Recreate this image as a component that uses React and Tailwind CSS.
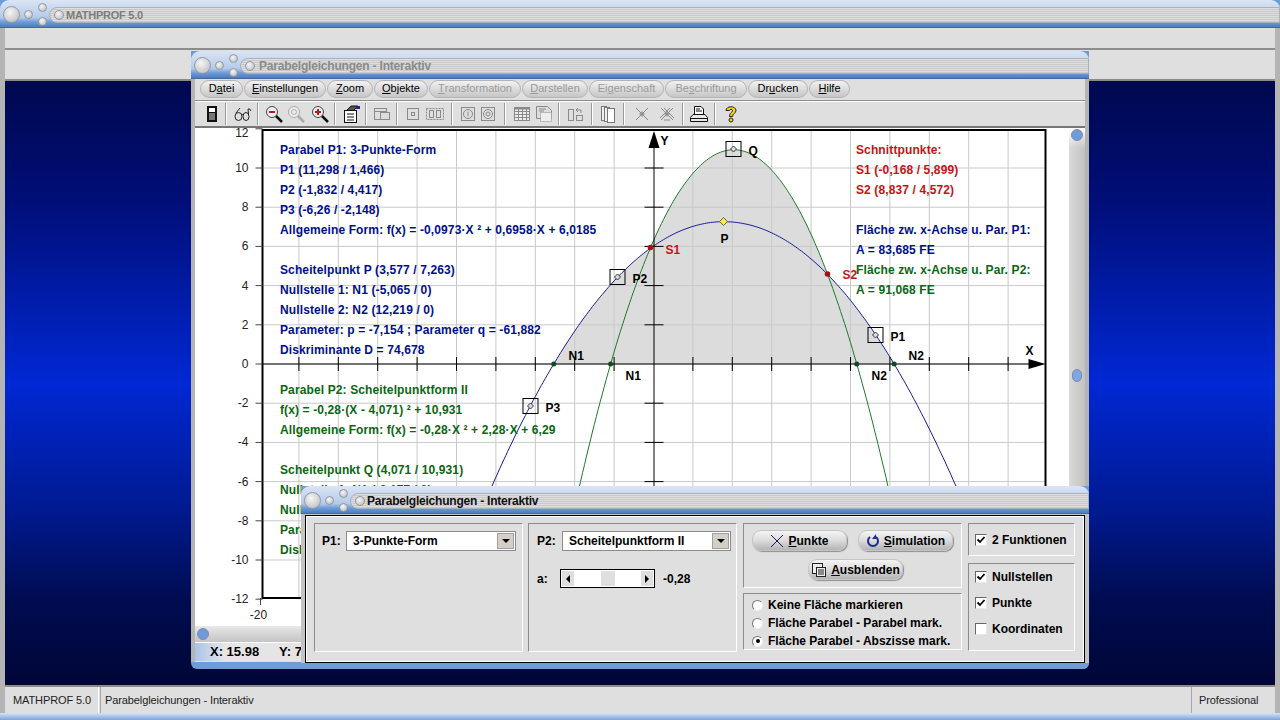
import React from "react";

const FONT = "font-['Liberation_Sans',Arial,sans-serif]";

// Parabolas shown in the plot, and the pixel mapping of the axes
const p1 = (x) => -0.0973 * x * x + 0.6958 * x + 6.0185;
const p2 = (x) => -0.28 * x * x + 2.28 * x + 6.29;
const px = (x) => 653 + x * 19.7;
const py = (y) => 364 - y * 19.6;

const curve = (f) => {
  let d = "";
  for (let x = -20; x <= 20; x += 0.1) d += `${d ? "L" : "M"}${px(x).toFixed(1)} ${py(f(x)).toFixed(1)} `;
  return d;
};

const areaPath = () => {
  let d = `M${px(-5.065)} ${py(0)} `;
  for (let x = -5.065; x <= 12.219; x += 0.05) d += `L${px(x).toFixed(1)} ${py(Math.max(p1(x), p2(x), 0)).toFixed(1)} `;
  return d + `L${px(12.219)} ${py(0)} Z`;
};

const Knob = ({ className }) => (
  <span className={`block rounded-full border border-[#8d99ab] bg-[radial-gradient(circle_at_40%_35%,#f6f6f6,#b6b6b6)] ${className}`} />
);

const TitleBar = ({ title, titleClass }) => (
  <div className="flex h-[28px] shrink-0 items-start rounded-t-[9px] border-b border-[#46689a] bg-[linear-gradient(180deg,#dbe5f4_0%,#b5cae9_65%,#6a9ad8_82%,#4d7dbd_100%)] pl-[3px]">
    <Knob className="mt-[6px] h-[17px] w-[17px]" />
    <Knob className="ml-[4px] mt-[10px] h-[9px] w-[9px]" />
    <div className="ml-[5px] flex flex-col gap-[5px] pt-[3px]">
      <Knob className="h-[9px] w-[9px]" />
      <Knob className="h-[9px] w-[9px]" />
    </div>
    <div className="ml-[2px] mt-[7px] flex h-[16px] flex-1 items-center rounded-l-[9px] border border-[#aab2bd] bg-[repeating-linear-gradient(180deg,#dedede_0,#dedede_1px,#c9c9c9_1px,#c9c9c9_2px)] pl-[4px]">
      <Knob className="h-[10px] w-[10px]" />
      <span className={`ml-[2px] font-bold leading-none ${titleClass}`}>{title}</span>
    </div>
  </div>
);

const menus = [
  ["D", "a", "tei", "w-[43px]", true],
  ["", "E", "instellungen", "w-[82px]", true],
  ["", "Z", "oom", "w-[46px]", true],
  ["", "O", "bjekte", "w-[54px]", true],
  ["", "T", "ransformation", "w-[92px]", false],
  ["", "D", "arstellen", "w-[66px]", false],
  ["Ei", "g", "enschaft", "w-[75px]", false],
  ["Be", "s", "chriftung", "w-[82px]", false],
  ["Dr", "u", "cken", "w-[60px]", true],
  ["", "H", "ilfe", "w-[41px]", true],
];

const IconDevice = () => (
  <svg width="20" height="20" viewBox="0 0 20 20"><rect x="5" y="2" width="10" height="16" fill="#111" /><rect x="7" y="4" width="6" height="4" fill="#fff" /><rect x="7" y="9" width="6" height="7" fill="#777" /></svg>
);
const IconGlasses = () => (
  <svg width="20" height="20" viewBox="0 0 20 20" fill="none" stroke="#222" strokeWidth="1"><ellipse cx="5.5" cy="12.5" rx="3.5" ry="4" /><ellipse cx="13" cy="12.5" rx="3" ry="4" /><path d="M9 11 Q9.500 10 10 11M3 9 L7 4 M15.500 10 L15 5 Q17 4 18 7" /></svg>
);
const IconMag = ({ sign, tone }) => (
  <svg width="20" height="20" viewBox="0 0 20 20" fill="none">
    <circle cx="8" cy="8" r="5.500" stroke={tone ? "#444" : "#aaa"} fill="#eee" />
    <path d="M12 12 L18 18" stroke={tone ? "#111" : "#aaa"} strokeWidth="2.500" />
    {sign === "o" && <circle cx="8" cy="8" r="2.500" stroke="#aaa" />}
    {sign !== "o" && <path d={sign === "+" ? "M5 8 H11 M8 5 V11" : "M5 8 H11"} stroke="#c01818" strokeWidth="2" />}
  </svg>
);
const IconClipboard = () => (
  <svg width="20" height="20" viewBox="0 0 20 20" fill="none" stroke="#111"><rect x="3.500" y="6.500" width="12" height="12" fill="#fff" /><path d="M6 10H13M6 13H13M6 16H13" /><path d="M6 6 L10 2 L17 2 L13 6" fill="#555" /><rect x="15" y="2" width="4" height="3" fill="#1a2a90" stroke="none" /></svg>
);
const IconWindows = () => (
  <svg width="20" height="20" viewBox="0 0 20 20" fill="none" stroke="#8a8a8a"><rect x="2.500" y="4.500" width="12" height="11" /><rect x="8.500" y="8.500" width="9" height="7" fill="#ddd" /><path d="M2.500 7.500H14.500" /></svg>
);
const IconBox = () => (
  <svg width="20" height="20" viewBox="0 0 20 20" fill="none" stroke="#8a8a8a"><rect x="4.500" y="4.500" width="11" height="11" /><rect x="8.500" y="8.500" width="3" height="3" /></svg>
);
const IconDoubleBox = () => (
  <svg width="20" height="20" viewBox="0 0 20 20" fill="none" stroke="#8a8a8a"><rect x="1.500" y="4.500" width="17" height="11" strokeDasharray="2 1" /><rect x="4.500" y="6.500" width="4" height="7" /><rect x="11.500" y="6.500" width="4" height="7" /></svg>
);
const IconRound = ({ inner }) => (
  <svg width="20" height="20" viewBox="0 0 20 20" fill="none" stroke="#8a8a8a"><rect x="3.500" y="3.500" width="13" height="13" /><circle cx="10" cy="10" r="4.500" />{inner}</svg>
);
const IconTable = () => (
  <svg width="20" height="20" viewBox="0 0 20 20" fill="#eee" stroke="#8a8a8a"><rect x="2.500" y="4.500" width="15" height="12" /><path d="M2.500 7.500H17.500M2.500 10.500H17.500M2.500 13.500H17.500M6.500 4.500V16.500M10.500 4.500V16.500M14.500 4.500V16.500" /><rect x="2" y="3" width="16" height="2.500" fill="#8a8a8a" stroke="none" /></svg>
);
const IconSheets = () => (
  <svg width="20" height="20" viewBox="0 0 20 20" fill="#ddd" stroke="#8a8a8a"><path d="M2.500 2.500H13.500L17.500 6.500V14.500H2.500Z" /><rect x="6.500" y="8.500" width="11" height="9" fill="#eee" strokeDasharray="1 1" /><path d="M5 5H12M5 7H10" /></svg>
);
const IconArrange = () => (
  <svg width="20" height="20" viewBox="0 0 20 20" fill="none" stroke="#8a8a8a"><rect x="3.500" y="5.500" width="5" height="11" /><rect x="11.500" y="11.500" width="6" height="5" /><path d="M11 6H16V9M11 6L13 4M11 6L13 8" /></svg>
);
const IconPages = () => (
  <svg width="20" height="20" viewBox="0 0 20 20" fill="#eee" stroke="#777"><rect x="3.500" y="2.500" width="5" height="14" /><rect x="6.500" y="3.500" width="5" height="14" /><rect x="9.500" y="4.500" width="7" height="14" fill="#fff" /></svg>
);
const IconCross = ({ double }) => (
  <svg width="20" height="20" viewBox="0 0 20 20" fill="none" stroke="#8a8a8a"><path d="M4 4L16 16M16 4L4 16" />{double && <path d="M7 4L17 14M13 4L3 14M7 16L13 16" />}<circle cx="10" cy="10" r="2" /></svg>
);
const IconPrinter = () => (
  <svg width="20" height="20" viewBox="0 0 20 20" fill="#fff" stroke="#111"><path d="M5.500 2.500H12L14.500 5V10.500H5.500Z" /><path d="M7 5H11M7 7H13" /><path d="M4 10.500H16L18.500 13.500V17.500H1.500V13.500Z" fill="#e8e8e8" /><path d="M1.500 14.500H18.500" /></svg>
);
const IconHelp = () => (
  <svg width="20" height="20" viewBox="0 0 20 20" fill="#f2d21c" stroke="#222"><path d="M5 6.500C5 1.500 15 1.500 15 6.500C15 9.500 11.500 9.500 11.500 12.500H8.500C8.500 8.500 11.500 8.500 11.500 6.500C11.500 5 8.500 5 8.500 6.500Z" /><circle cx="10" cy="16" r="2" /></svg>
);

// ml values are the distance to the previous item, measured from the toolbar
const tools = [
  ["ml-[1px]", <IconDevice />],
  ["ml-[3px]"],
  ["ml-[6px]", <IconGlasses />],
  ["ml-[4px]"],
  ["ml-[5px]", <IconMag sign="-" tone />],
  ["ml-[2px]", <IconMag sign="o" />],
  ["ml-[4px]", <IconMag sign="+" tone />],
  ["ml-[4px]"],
  ["ml-[5px]", <IconClipboard />],
  ["ml-[4px]"],
  ["ml-[5px]", <IconWindows />],
  ["ml-[4px]"],
  ["ml-[5px]", <IconBox />],
  ["ml-[2px]", <IconDoubleBox />],
  ["ml-[6px]"],
  ["ml-[5px]", <IconRound inner={<path d="M10 7.500V12.500" />} />],
  ["ml-[0px]", <IconRound inner={<circle cx="10" cy="10" r="2" />} />],
  ["ml-[6px]"],
  ["ml-[6px]", <IconTable />],
  ["ml-[2px]", <IconSheets />],
  ["ml-[4px]"],
  ["ml-[5px]", <IconArrange />],
  ["ml-[6px]"],
  ["ml-[5px]", <IconPages />],
  ["ml-[5px]"],
  ["ml-[7px]", <IconCross />],
  ["ml-[5px]", <IconCross double />],
  ["ml-[5px]"],
  ["ml-[5px]", <IconPrinter />],
  ["ml-[5px]"],
  ["ml-[5px]", <IconHelp />],
];

const Plot = () => {
  const xs = [];
  for (let v = -18; v <= 18; v += 2) if (v !== 0) xs.push(v);
  const ys = [];
  for (let v = -12; v <= 12; v += 2) ys.push(v);
  const label = "fill-black text-[12px] font-bold";
  return (
    <svg className="absolute inset-0 h-full w-full overflow-visible" viewBox="195 128 873 498" fontFamily="Liberation Sans, Arial, sans-serif">
      <defs>
        <clipPath id="frame"><rect x="263" y="130" width="782" height="468" /></clipPath>
      </defs>
      <g clipPath="url(#frame)">
        <path d={areaPath()} fill="#dcdcdc" />
        {xs.map((v) => <path key={v} d={`M${px(v)} 130V598`} stroke="#c9c9c9" />)}
        {ys.map((v) => <path key={v} d={`M263 ${py(v)}H1045`} stroke="#c9c9c9" />)}
        <path d={curve(p1)} fill="none" stroke="#1a1a9a" />
        <path d={curve(p2)} fill="none" stroke="#1f7a2a" />
      </g>
      <rect x="262" y="130" width="783" height="468" fill="none" stroke="#000" strokeWidth="2" />
      {ys.map((v) => (
        <g key={v}>
          <path d={`M255 ${py(v)}H262`} stroke="#444" />
          <text x="248" y={v === 12 ? 137 : py(v) + 4} textAnchor="end" className="fill-[#222] text-[12px]">{v}</text>
        </g>
      ))}
      <path d="M260 598V605" stroke="#444" />
      <text x="258" y="619" textAnchor="middle" className="fill-[#222] text-[12px]">-20</text>
      {/* axes with arrows */}
      <path d="M262 364H1030" stroke="#000" />
      <path d="M1028 359L1045 364L1028 369Z" fill="#000" />
      <path d="M653.500 598V146" stroke="#000" />
      <path d="M648 148L653.500 131L659 148Z" fill="#000" />
      {xs.map((v) => <path key={v} d={`M${px(v)} 357V371`} stroke="#000" />)}
      {ys.filter((v) => v !== 0 && v < 12).map((v) => <path key={v} d={`M644 ${py(v)}H663`} stroke="#000" />)}
      {/* points */}
      {[[-5.065, 0], [-2.177, 0], [10.319, 0], [12.219, 0]].map(([x, y]) => (
        <circle key={x} cx={px(x)} cy={py(y)} r="2.500" fill="#0e4a22" />
      ))}
      <circle cx="650" cy="247.500" r="2.800" fill="#a31212" />
      <circle cx="827" cy="274" r="2.800" fill="#a31212" />
      <path d="M723 217.500L727 221.500L723 225.500L719 221.500Z" fill="#f2e85c" stroke="#6a6a20" />
      {[[733, 149], [617, 277], [875, 335], [530, 406]].map(([x, y]) => (
        <g key={x}>
          <rect x={x - 7.500} y={y - 7.500} width="15" height="15" fill="none" stroke="#000" />
          <path d={`M${x} ${y - 3}L${x + 3} ${y}L${x} ${y + 3}L${x - 3} ${y}Z`} fill="#ddd" stroke="#333" />
        </g>
      ))}
      <text x="660" y="145" className={label}>Y</text>
      <text x="1025" y="355" className={label}>X</text>
      <text x="748" y="155" className={label}>Q</text>
      <text x="720" y="243" className={label}>P</text>
      <text x="632" y="283" className={label}>P2</text>
      <text x="890" y="341" className={label}>P1</text>
      <text x="545" y="412" className={label}>P3</text>
      <text x="568" y="360" className={label}>N1</text>
      <text x="625" y="380" className={label}>N1</text>
      <text x="871" y="380" className={label}>N2</text>
      <text x="908" y="360" className={label}>N2</text>
      <text x="665" y="254" className="fill-[#c01818] text-[12px] font-bold">S1</text>
      <text x="842" y="279" className="fill-[#c01818] text-[12px] font-bold">S2</text>
    </svg>
  );
};

const leftLines = [
  ["Parabel P1: 3-Punkte-Form", "text-[#00108c]"],
  ["P1 (11,298 / 1,466)", "text-[#00108c]"],
  ["P2 (-1,832 / 4,417)", "text-[#00108c]"],
  ["P3 (-6,26 / -2,148)", "text-[#00108c]"],
  ["Allgemeine Form: f(x) = -0,0973·X ² + 0,6958·X + 6,0185", "text-[#00108c]"],
  [""],
  ["Scheitelpunkt P (3,577 / 7,263)", "text-[#00108c]"],
  ["Nullstelle 1: N1 (-5,065 / 0)", "text-[#00108c]"],
  ["Nullstelle 2: N2 (12,219 / 0)", "text-[#00108c]"],
  ["Parameter: p = -7,154 ; Parameter q = -61,882", "text-[#00108c]"],
  ["Diskriminante D = 74,678", "text-[#00108c]"],
  [""],
  ["Parabel P2: Scheitelpunktform II", "text-[#0a6614]"],
  ["f(x) = -0,28·(X - 4,071) ² + 10,931", "text-[#0a6614]"],
  ["Allgemeine Form: f(x) = -0,28·X ² + 2,28·X + 6,29", "text-[#0a6614]"],
  [""],
  ["Scheitelpunkt Q (4,071 / 10,931)", "text-[#0a6614]"],
  ["Nullstelle 1: N1 (-2,177 / 0)", "text-[#0a6614]"],
  ["Nullstelle 2: N2 (10,319 / 0)", "text-[#0a6614]"],
  ["Parameter: p = -8,143 ; Parameter q = -22,464", "text-[#0a6614]"],
  ["Diskriminante D = 39,041", "text-[#0a6614]"],
];

const rightLines = [
  ["Schnittpunkte:", "text-[#c41414]"],
  ["S1 (-0,168 / 5,899)", "text-[#c41414]"],
  ["S2 (8,837 / 4,572)", "text-[#c41414]"],
  [""],
  ["Fläche zw. x-Achse u. Par. P1:", "text-[#00108c]"],
  ["A = 83,685 FE", "text-[#00108c]"],
  ["Fläche zw. x-Achse u. Par. P2:", "text-[#0a6614]"],
  ["A = 91,068 FE", "text-[#0a6614]"],
];

const TextBlock = ({ lines, className }) => (
  <div className={`absolute text-[12px] font-bold leading-[20px] tracking-[0.12px] ${className}`}>
    {lines.map(([text, color], i) => (
      <div key={i} className={`h-[20px] whitespace-nowrap ${color || ""}`}>{text}</div>
    ))}
  </div>
);

const Panel = ({ className, children }) => (
  <div className={`border border-b-white border-l-[#8c8c8c] border-r-white border-t-[#8c8c8c] bg-[#dfdfdf] ${className}`}>{children}</div>
);

const Combo = ({ label, value, className, labelClass }) => (
  <div className={`flex items-center ${className || ""}`}>
    <span className={`text-[12px] font-bold ${labelClass}`}>{label}</span>
    <div className="flex h-[20px] flex-1 items-center border border-[#8c8c8c] bg-white pl-[6px]">
      <span className="flex-1 text-[12px] font-bold">{value}</span>
      <span className="mr-[1px] flex h-[16px] w-[17px] items-center justify-center border border-[#a0a0a0] bg-[#d4d0c8]">
        <span className="border-x-[4px] border-t-[4px] border-x-transparent border-t-black" />
      </span>
    </div>
  </div>
);

const PushButton = ({ icon, first, rest, className }) => (
  <div className={`flex h-[21px] items-center justify-center gap-[4px] rounded-[9px] border border-[#c4c4c4] bg-gradient-to-b from-[#f4f4f4] via-[#dcdcdc] to-[#b4b4b4] text-[12px] font-bold shadow-[1px_1px_1px_#8f8f8f] ${className}`}>
    {icon}
    <span><u>{first}</u>{rest}</span>
  </div>
);

const Check = ({ label, checked, className }) => (
  <div className={`flex h-[14px] items-center gap-[5px] ${className || ""}`}>
    <span className="flex h-[12px] w-[12px] items-center justify-center border border-b-[#e8e8e8] border-l-[#666] border-r-[#e8e8e8] border-t-[#666] bg-white">
      {checked && (
        <svg width="10" height="10" viewBox="0 0 10 10"><path d="M1.500 4.500L4 7L8.500 2" fill="none" stroke="#000" strokeWidth="1.800" /></svg>
      )}
    </span>
    <span className="text-[12px] font-bold">{label}</span>
  </div>
);

const Radio = ({ label, checked }) => (
  <div className="flex h-[18px] items-center gap-[5px]">
    <span className="flex h-[11px] w-[11px] items-center justify-center rounded-full border border-b-[#eee] border-l-[#777] border-r-[#eee] border-t-[#777] bg-white">
      {checked && <span className="h-[4px] w-[4px] rounded-full bg-black" />}
    </span>
    <span className="text-[12px] font-bold">{label}</span>
  </div>
);

const InteractiveWindow = () => (
  <div className="absolute left-[191px] top-[51px] flex h-[618px] w-[898px] flex-col overflow-hidden rounded-b-[6px] bg-[#6f9bd6]">
    <TitleBar title="Parabelgleichungen - Interaktiv" titleClass="ml-[4px] text-[12px] tracking-[-0.2px] text-[#8a8a8a]" />
    <div className="flex flex-1 flex-col border-x-[4px] border-x-[#b4b4b4] bg-[#dfdfdf] text-black">
      <div className="flex h-[22px] shrink-0 items-center gap-[1px] border-b border-[#8c8c8c] pb-[2px] pl-[5px]">
        {menus.map(([a, m, b, w, on]) => (
          <div
            key={m + b}
            className={`flex h-[18px] items-center justify-center rounded-full border border-[#b4b4b4] bg-gradient-to-b from-[#f2f2f2] to-[#c6c6c6] text-[11px] ${w} ${on ? "text-black" : "text-[#9a9a9a]"}`}
          >
            {a}<u>{m}</u>{b}
          </div>
        ))}
      </div>
      <div className="flex h-[27px] shrink-0 items-center border-b-2 border-t border-b-[#777] border-t-white pb-[1px] pl-[6px]">
        {tools.map(([ml, icon], i) =>
          icon ? (
            <span key={i} className={`flex h-[20px] w-[20px] items-center justify-center ${ml}`}>{icon}</span>
          ) : (
            <span key={i} className={`h-[22px] w-[2px] border-l border-r border-l-[#9a9a9a] border-r-white ${ml}`} />
          ),
        )}
      </div>
      <div className="flex h-[498px] shrink-0">
        <div className="relative flex-1 bg-white">
          <Plot />
          <TextBlock lines={leftLines} className="left-[85px] top-[12px]" />
          <TextBlock lines={rightLines} className="left-[661px] top-[12px]" />
        </div>
        <div className="relative w-[16px] bg-gradient-to-r from-[#dadada] to-[#c2c2c2]">
          <span className="absolute left-0 top-0 h-[20px] w-full bg-gradient-to-b from-white to-transparent" />
          <span className="absolute left-[2px] top-[1px] h-[12px] w-[12px] rounded-full border border-[#88a] bg-[#6f9bdc]" />
          <span className="absolute left-[3px] top-[241px] h-[13px] w-[10px] rounded-full border border-[#88a] bg-[#79a8e4]" />
        </div>
      </div>
      <div className="flex h-[17px] shrink-0 items-center border-b border-white bg-gradient-to-b from-[#e8e8e8] to-[#c4c4c4] pl-[2px]">
        <span className="h-[12px] w-[12px] rounded-full border border-[#88a] bg-[#6f9bdc]" />
      </div>
      <div className="flex h-[18px] shrink-0 items-center bg-[linear-gradient(90deg,#a9c4e8_0,#e6e6e6_30px,#cfcfcf_100%)] pl-[15px] text-[13px] font-bold">
        <span className="w-[69px]">X: 15.98</span>
        <span>Y: 7.31</span>
      </div>
    </div>
    <div className="h-[7px] shrink-0" />
  </div>
);

const DialogWindow = () => (
  <div className="absolute left-[301px] top-[486px] flex h-[183px] w-[788px] flex-col overflow-hidden rounded-b-[6px] bg-[#6f9bd6]">
    <TitleBar title="Parabelgleichungen - Interaktiv" titleClass="text-[12px] tracking-[-0.22px] text-[#111]" />
    <div className="border-x-[4px] border-x-[#c4c4c4] bg-[#c4c4c4] pt-[1px]">
      <div className="flex h-[148px] gap-[5px] border border-black bg-[#dfdfdf] px-[8px] py-[7px] text-black shadow-[inset_0_0_0_1px_#ffffff]">
        <Panel className="h-[129px] w-[209px] pl-[7px] pr-[6px] pt-[7px]">
          <Combo label="P1:" value="3-Punkte-Form" labelClass="w-[24px]" />
        </Panel>
        <Panel className="h-[129px] w-[209px] pl-[8px] pr-[5px] pt-[7px]">
          <Combo label="P2:" value="Scheitelpunktform II" labelClass="w-[25px]" />
          <div className="mt-[18px] flex items-center text-[12px] font-bold">
            <span className="w-[23px]">a:</span>
            <div className="flex h-[19px] w-[95px] items-center justify-between border border-black bg-white px-[1px]">
              <span className="flex h-[15px] w-[12px] items-center justify-center bg-[#dfdfdf]"><span className="border-y-[4px] border-r-[4px] border-y-transparent border-r-black" /></span>
              <span className="h-[15px] w-[14px] bg-[#dfdfdf]" />
              <span className="flex h-[15px] w-[12px] items-center justify-center bg-[#dfdfdf]"><span className="border-y-[4px] border-l-[4px] border-y-transparent border-l-black" /></span>
            </div>
            <span className="ml-[8px]">-0,28</span>
          </div>
        </Panel>
        <div className="ml-[1px] flex w-[219px] flex-col gap-[5px]">
          <Panel className="h-[65px] px-[8px] pt-[6px]">
            <div className="flex justify-between">
              <PushButton
                className="w-[95px]"
                first="P"
                rest="unkte"
                icon={<svg width="14" height="14" viewBox="0 0 14 14"><path d="M1 1L13 13M13 1L1 13" stroke="#1a1a50" fill="none" /></svg>}
              />
              <PushButton
                className="w-[95px]"
                first="S"
                rest="imulation"
                icon={<svg width="14" height="14" viewBox="0 0 14 14"><path d="M4 3A5 5 0 1 0 10 3" stroke="#1a2a90" strokeWidth="2" fill="none" /><path d="M10 0V5H6" fill="#1a2a90" /></svg>}
              />
            </div>
            <div className="mt-[8px] flex pl-[56px]">
              <PushButton
                className="w-[95px]"
                first="A"
                rest="usblenden"
                icon={<svg width="16" height="16" viewBox="0 0 16 16" fill="#eee" stroke="#222"><rect x="1.500" y="1.500" width="10" height="10" /><rect x="5.500" y="5.500" width="9" height="9" /><path d="M7 8H13M7 10H13M7 12H13" /></svg>}
              />
            </div>
          </Panel>
          <Panel className="h-[57px] pl-[8px] pt-[2px]">
            <Radio label="Keine Fläche markieren" />
            <Radio label="Fläche Parabel - Parabel mark." />
            <Radio label="Fläche Parabel - Abszisse mark." checked />
          </Panel>
        </div>
        <div className="ml-[1px] flex w-[107px] flex-col gap-[7px]">
          <Panel className="flex h-[33px] items-center pl-[6px]">
            <Check label="2 Funktionen" checked />
          </Panel>
          <Panel className="flex h-[88px] flex-col gap-[12px] px-[6px] pt-[6px]">
            <Check label="Nullstellen" checked />
            <Check label="Punkte" checked />
            <Check label="Koordinaten" />
          </Panel>
        </div>
      </div>
    </div>
  </div>
);

export default function App() {
  return (
    <div className={`relative flex h-[720px] w-[1280px] flex-col overflow-hidden bg-[#6f9bd6] text-black ${FONT}`}>
      <TitleBar title="MATHPROF 5.0" titleClass="text-[11px] tracking-[-0.25px] text-[#7c7c7c]" />
      <div className="flex flex-1 flex-col border-x-[5px] border-x-[#b4b4b4] bg-[#dfdfdf]">
        <div className="h-[22px] shrink-0 border-b-2 border-[#8c8c8c]" />
        <div className="h-[31px] shrink-0 border-b-2 border-[#8c8c8c]" />
        <div className="flex-1 bg-[linear-gradient(180deg,#00084e_0%,#000e78_20%,#0028d4_50%,#001a90_71%,#000c50_86%,#000636_100%)]" />
        <div className="flex h-[28px] shrink-0 items-stretch gap-[1px] border-t-2 border-[#8c8c8c] text-[11px] tracking-[-0.1px] text-[#222]">
          <div className="flex w-[94px] items-center border-r border-white pl-[8px]">MATHPROF 5.0</div>
          <div className="flex flex-1 items-center border-l border-[#a8a8a8] pl-[4px]">Parabelgleichungen - Interaktiv</div>
          <div className="flex w-[84px] items-center border-l border-[#a8a8a8] pl-[7px]">Professional</div>
        </div>
      </div>
      <div className="h-[7px] shrink-0 bg-gradient-to-b from-[#d9e4f4] to-[#7ba4dc]" />
      <InteractiveWindow />
      <DialogWindow />
    </div>
  );
}
